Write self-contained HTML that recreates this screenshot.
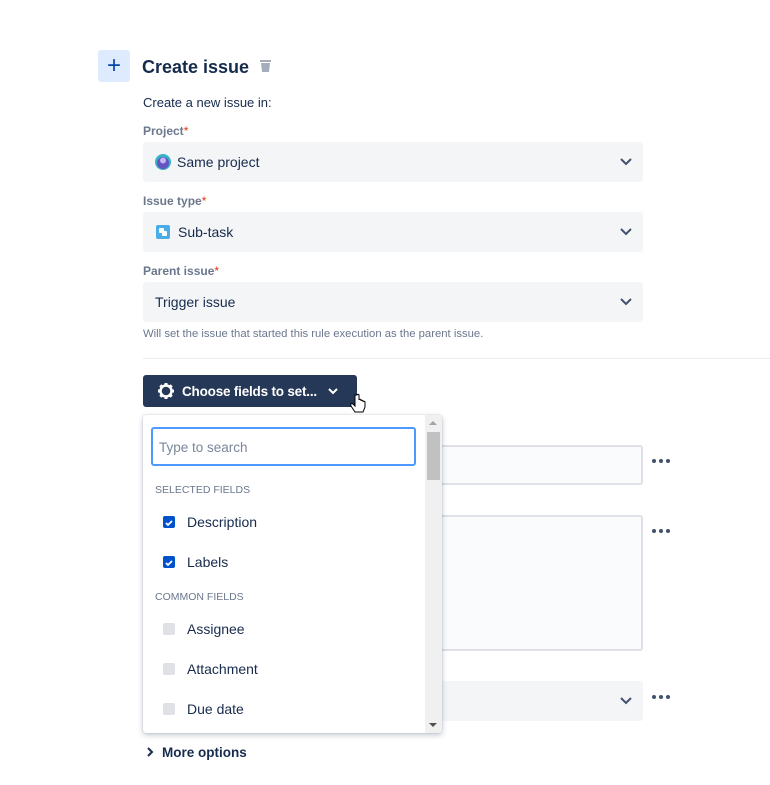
<!DOCTYPE html>
<html><head><meta charset="utf-8"><style>
*{box-sizing:border-box;margin:0;padding:0}
body{width:770px;height:785px;background:#fff;font-family:"Liberation Sans",sans-serif;color:#172b4d;position:relative;overflow:hidden}
.a{position:absolute}
.lbl{font-size:12px;color:#6b778c;font-weight:bold}
.lbl span{color:#de350b;font-weight:normal}
.sel{background:#f4f5f7;border-radius:3px;height:40px;width:500px;left:143px;font-size:14px;display:flex;align-items:center;padding-left:12px}
.chev{position:absolute;right:10px;top:13px}
.dots{font-size:0}
.dots i{display:inline-block;width:4px;height:4px;border-radius:2px;background:#42526e;margin-right:3px}
.cb{position:absolute;left:20px;width:12px;height:12px;border-radius:2px;background:#dfe1e6}
.cb.on{background:#0052cc}
.it{position:absolute;left:44px;font-size:14px;color:#172b4d}
.hd{position:absolute;left:12px;font-size:10.5px;color:#6b778c}
</style></head><body>
<div class="a" style="left:98px;top:50px;width:32px;height:32px;background:#deebff;border-radius:3px;color:#0747a6;font-size:24px;text-align:center;line-height:31px">+</div>
<div class="a" style="left:142px;top:57px;font-size:18px;font-weight:bold;color:#172b4d">Create issue</div>
<svg class="a" style="left:259px;top:59px" width="13" height="14" viewBox="0 0 13 14"><rect x="1" y="1" width="11" height="2" fill="#a5adba"/><path d="M2 4h9l-1 9H3z" fill="#a5adba"/></svg>
<div class="a" style="left:143px;top:95px;font-size:13px">Create a new issue in:</div>
<div class="a lbl" style="left:143px;top:124px">Project<span>*</span></div>
<div class="a sel" style="top:142px"><svg width="16" height="16" viewBox="0 0 16 16" style="margin-right:6px"><circle cx="8" cy="8" r="8" fill="#36b3c4"/><circle cx="8" cy="9" r="6" fill="#6554c0"/><circle cx="8" cy="6.5" r="3" fill="#c0b6f2"/></svg>Same project<svg class="chev" width="14" height="14"><path d="M2 4l5 5 5-5" stroke="#42526e" stroke-width="2" fill="none"/></svg></div>
<div class="a lbl" style="left:143px;top:194px">Issue type<span>*</span></div>
<div class="a sel" style="top:212px"><svg width="14" height="14" style="margin-right:8px;margin-left:1px"><rect width="14" height="14" rx="2" fill="#4bade8"/><rect x="3" y="3" width="5" height="5" rx="1" fill="#fff"/><rect x="6" y="6" width="5" height="5" rx="1" fill="#fff"/></svg>Sub-task<svg class="chev" width="14" height="14"><path d="M2 4l5 5 5-5" stroke="#42526e" stroke-width="2" fill="none"/></svg></div>
<div class="a lbl" style="left:143px;top:264px">Parent issue<span>*</span></div>
<div class="a sel" style="top:282px">Trigger issue<svg class="chev" width="14" height="14"><path d="M2 4l5 5 5-5" stroke="#42526e" stroke-width="2" fill="none"/></svg></div>
<div class="a" style="left:143px;top:328px;font-size:11.3px;color:#6b778c">Will set the issue that started this rule execution as the parent issue.</div>
<div class="a" style="left:143px;top:358px;width:627px;height:1px;background:#ebecf0"></div>
<div class="a" style="left:143px;top:375px;width:214px;height:32px;background:#253858;border-radius:3px;color:#fff;font-size:13.5px;font-weight:bold;display:flex;align-items:center;padding-left:14px;letter-spacing:-0.2px">
<svg width="18" height="18" viewBox="0 0 18 18" style="margin-right:7px"><circle cx="9" cy="9" r="5.5" fill="none" stroke="#fff" stroke-width="2.5"/><g stroke="#fff" stroke-width="3"><path d="M9 1v3M9 14v3M1 9h3M14 9h3M3.3 3.3l2 2M12.7 12.7l2 2M3.3 14.7l2-2M12.7 5.3l2-2"/></g></svg>Choose fields to set...<svg width="12" height="12" style="margin-left:10px"><path d="M2 4l4 4 4-4" stroke="#fff" stroke-width="2" fill="none"/></svg></div>
<svg class="a" style="left:350px;top:393px" width="18" height="22" viewBox="0 0 18 22"><path d="M5 2v11l-2-2c-1-1-3 0-2 2l4 6h8l2-5v-5c0-1-2-1-2 0v-1c0-1-2-1-2 0v-1c0-1-2-1-2 0V2c0-1-2-1-2 0z" fill="#fff" stroke="#000" stroke-width="1"/></svg>
<div class="a" style="left:420px;top:445px;width:223px;height:40px;background:#fafbfc;border:2px solid #dfe1e6;border-radius:3px"></div>
<div class="a dots" style="left:652px;top:459px"><i></i><i></i><i></i></div>
<div class="a" style="left:420px;top:515px;width:223px;height:136px;background:#fafbfc;border:2px solid #dfe1e6;border-radius:3px"></div>
<div class="a dots" style="left:652px;top:529px"><i></i><i></i><i></i></div>
<div class="a" style="left:420px;top:681px;width:223px;height:40px;background:#f4f5f7;border-radius:3px"><svg style="position:absolute;right:10px;top:13px" width="14" height="14"><path d="M2 4l5 5 5-5" stroke="#42526e" stroke-width="2" fill="none"/></svg></div>
<div class="a dots" style="left:652px;top:695px"><i></i><i></i><i></i></div>
<div class="a" style="left:143px;top:415px;width:299px;height:318px;background:#fff;border-radius:3px;box-shadow:0 2px 6px rgba(9,30,66,.25),0 0 1px rgba(9,30,66,.3);overflow:hidden">
<div class="a" style="right:0;top:0;width:17px;height:318px;background:#f0f0f0"><div style="position:absolute;left:2px;top:17px;width:13px;height:48px;background:#c1c1c1"></div>
<div style="position:absolute;left:4px;top:6px;border:4px solid transparent;border-bottom-color:#a3a3a3;border-top:0"></div>
<div style="position:absolute;left:4px;bottom:6px;border:4px solid transparent;border-top-color:#505050;border-bottom:0"></div></div>
<div class="a" style="left:8px;top:12px;width:265px;height:39px;border:2px solid #4c9aff;border-radius:3px;font-size:13.5px;color:#7a869a;padding:11px 6px">Type to search</div>
<div class="hd" style="top:69px">SELECTED FIELDS</div>
<div class="cb on" style="top:101px"><svg width="12" height="12"><path d="M3 6l2 2 4-4" stroke="#fff" stroke-width="1.8" fill="none"/></svg></div><div class="it" style="top:99px">Description</div>
<div class="cb on" style="top:141px"><svg width="12" height="12"><path d="M3 6l2 2 4-4" stroke="#fff" stroke-width="1.8" fill="none"/></svg></div><div class="it" style="top:139px">Labels</div>
<div class="hd" style="top:176px">COMMON FIELDS</div>
<div class="cb" style="top:208px"></div><div class="it" style="top:206px">Assignee</div>
<div class="cb" style="top:248px"></div><div class="it" style="top:246px">Attachment</div>
<div class="cb" style="top:288px"></div><div class="it" style="top:286px">Due date</div>
</div>
<svg class="a" style="left:146px;top:747px" width="8" height="10"><path d="M2 1l4 4-4 4" stroke="#172b4d" stroke-width="2" fill="none"/></svg>
<div class="a" style="left:162px;top:745px;font-size:13.5px;font-weight:bold;color:#172b4d">More options</div>
</body></html>
